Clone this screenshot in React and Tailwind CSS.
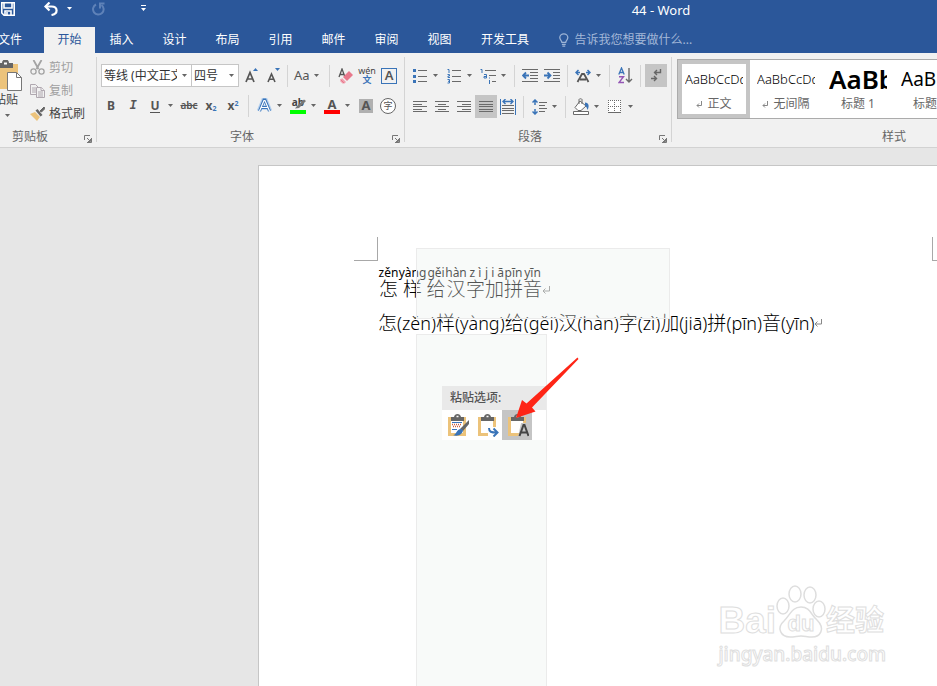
import React from "react";

const G = "#6a6a6a";
const B = "#3a74b8";

function Caret({ className = "text-[#666]" }) {
  return (
    <svg width="5" height="3" viewBox="0 0 5 3" className={className} aria-hidden="true">
      <path d="M0 0h5L2.5 3z" fill="currentColor" />
    </svg>
  );
}

function Tool({ label, active, children }) {
  return (
    <button
      type="button"
      aria-label={label}
      className={`flex h-[23px] w-[22px] shrink-0 items-center justify-center ${active ? "bg-[#c5c5c5]" : ""}`}
    >
      {children}
    </button>
  );
}

function Drop({ label }) {
  return (
    <button type="button" aria-label={label} className="flex h-[23px] w-3 shrink-0 items-center pl-[2px]">
      <Caret />
    </button>
  );
}

function Sep({ className = "mx-1" }) {
  return <span className={`h-[22px] w-px shrink-0 bg-[#d4d4d4] ${className}`} />;
}

function Combo({ label, value, className }) {
  return (
    <label className={`relative flex h-[23px] shrink-0 border border-[#c6c6c6] bg-white ${className}`}>
      <span className="sr-only">{label}</span>
      <select
        defaultValue={value}
        className="h-full w-full appearance-none overflow-hidden bg-transparent pr-[14px] pl-[2px] text-xs text-[#333] outline-none"
      >
        <option>{value}</option>
      </select>
      <span className="pointer-events-none absolute top-[9px] right-1 flex">
        <Caret />
      </span>
    </label>
  );
}

function Launcher({ label }) {
  return (
    <button type="button" aria-label={label} className="mr-1 mt-1 flex h-2 w-2 shrink-0">
      <svg width="8" height="8" viewBox="0 0 8 8" fill="none" stroke="#777">
        <path d="M.5 5V.5H6" />
        <path d="M3 3l3 3" />
        <path d="M7.5 3v4.5H3M6.5 4v2.5H4" />
      </svg>
    </button>
  );
}

function GroupLabel({ children, launcher = true, className = "" }) {
  return (
    <div className="flex items-center">
      <div className={`flex-1 text-center text-xs leading-[18px] text-[#666] ${className}`}>{children}</div>
      {launcher && <Launcher label={`${children}设置`} />}
    </div>
  );
}

function Lines({ rows }) {
  return (
    <svg width="14" height="15" viewBox="0 0 14 15" stroke={G} aria-hidden="true">
      {rows.map(([a, b], i) => (
        <path key={i} d={`M${a} ${[2.5, 5.5, 7.5, 10.5, 12.5][i]}H${b}`} />
      ))}
    </svg>
  );
}

const tabs = ["插入", "设计", "布局", "引用", "邮件", "审阅", "视图"];

function Header() {
  return (
    <header className="bg-[#2b579a] text-white">
      <div className="flex h-[22px] items-center">
        <div className="flex w-[385px] shrink-0 items-center pb-[5px]">
          <button type="button" aria-label="保存" className="ml-px">
            <svg width="14" height="14" viewBox="0 0 14 14" fill="none" stroke="white" strokeWidth="1.6">
              <path d="M.8.8h12.4v12.4H3L.8 11z" />
              <path d="M3 1v5h8V1" />
              <path d="M4 13V9h6v4" />
              <path d="M6 10v3" />
            </svg>
          </button>
          <button type="button" aria-label="撤消" className="ml-7">
            <svg width="16" height="14" viewBox="0 0 16 14" fill="none" stroke="white" strokeWidth="2.2">
              <path d="M6.500 .5L2.500 4.500l4 4" />
              <path d="M2.500 4.500h6c6.500 0 7 7.500 0 8.500" />
            </svg>
          </button>
          <button type="button" aria-label="撤消列表" className="ml-2 flex h-4 items-center">
            <Caret className="text-white" />
          </button>
          <button type="button" aria-label="重复" className="ml-5">
            <svg width="13" height="14" viewBox="0 0 13 14" fill="none" stroke="#5f82b8" strokeWidth="2">
              <path d="M4 2.500a5.300 5.300 0 1 0 5.500 .5" />
              <path d="M8 6.500V1.500H12.500" />
            </svg>
          </button>
          <button type="button" aria-label="自定义快速访问工具栏" className="ml-9">
            <svg width="6" height="7" viewBox="0 0 6 7" fill="white">
              <path d="M0 0h5v1H0zM0 3h5L2.500 6z" />
            </svg>
          </button>
        </div>
        <h1 className="flex-1 pb-[2px] text-center text-[13px] leading-[18px]">44 - Word</h1>
      </div>
      <nav className="flex pt-[5px] text-xs">
        <button type="button" className="-ml-4 h-[26px] w-[60px] shrink-0 pr-2 pb-px">
          文件
        </button>
        <button type="button" className="h-[26px] w-[51px] shrink-0 bg-[#f1f1f1] pb-px text-[#2b579a]">
          开始
        </button>
        {tabs.map((t) => (
          <button type="button" key={t} className="h-[26px] w-[53px] shrink-0 pb-px">
            {t}
          </button>
        ))}
        <button type="button" className="h-[26px] w-[78px] shrink-0 pb-px">
          开发工具
        </button>
        <label className="ml-[15px] flex min-w-0 flex-1 items-center gap-[6px]">
          <svg width="10" height="14" viewBox="0 0 10 14" fill="none" stroke="#9db4d6" strokeWidth="1.300">
            <path d="M3 9.500C3 7.500.8 7 .8 4.500a4.200 4 0 0 1 8.400 0C9.200 7 7 7.500 7 9.500z" />
            <path d="M3 11.500h4M3.500 13.300h3" />
          </svg>
          <input
            aria-label="告诉我您想要做什么"
            placeholder="告诉我您想要做什么..."
            className="w-full bg-transparent text-xs outline-none placeholder:text-[#a3b8d8]"
          />
        </label>
      </nav>
    </header>
  );
}

function Clipboard() {
  return (
    <section className="flex w-[96px] shrink-0 flex-col">
      <div className="flex h-[75px]">
        <button type="button" className="flex w-[30px] shrink-0 flex-col items-start pt-[7px] text-xs text-[#444]">
          <svg width="22" height="32" viewBox="0 0 22 32" aria-hidden="true">
            <path d="M0 4h18v25H0z" fill="#ecc37b" />
            <path d="M0 3h2a3.500 3.500 0 0 1 7 0h4v5H0z" fill="#666" />
            <path d="M4 3.500h3" stroke="white" strokeWidth="2" />
            <path d="M7.500 12.500h9l5 5v13h-14z" fill="white" stroke="#777" />
            <path d="M16.500 12.500v5h5" fill="none" stroke="#777" />
          </svg>
          <span className="-ml-[6px] leading-4">粘贴</span>
          <span className="flex pt-[6px] pl-[5px]">
            <Caret />
          </span>
        </button>
        <div className="flex flex-col pt-[3px] text-xs text-[#a0a0a0]">
          <button type="button" className="flex h-[23px] items-center gap-1">
            <svg width="15" height="15" viewBox="0 0 15 15" fill="none" stroke="#a3a3a3">
              <path d="M3.500 0l5 9M11.500 0l-5 9" strokeWidth="1.800" />
              <circle cx="3.500" cy="11.500" r="2.600" strokeWidth="1.300" />
              <circle cx="11.500" cy="11.500" r="2.600" strokeWidth="1.300" />
            </svg>
            剪切
          </button>
          <button type="button" className="flex h-[23px] items-center gap-1">
            <svg width="15" height="14" viewBox="0 0 15 14" fill="#f1f1f1" stroke="#b0a8b0">
              <path d="M.5.5h5l3 3v7h-8z" />
              <path d="M2 4h4M2 6h4M2 8h4" />
              <path d="M6.500 3.500h5l3 3v7h-8z" />
              <path d="M11 3.500v3h3.500M8 8h5M8 10h5M8 12h5" />
            </svg>
            复制
          </button>
          <button type="button" className="flex h-[23px] items-center gap-1 text-[#444]">
            <svg width="15" height="14" viewBox="0 0 15 14" aria-hidden="true">
              <path d="M0 7l5-2 5 5-3 4z" fill="#ecc37b" />
              <path d="M5.500 3.500L7.500 2l5 6-2 1.500z" fill="#666" />
              <path d="M10 4l4-4 1 1.500L11.500 5z" fill="#666" stroke="#666" />
            </svg>
            格式刷
          </button>
        </div>
      </div>
      <GroupLabel className="pr-6">剪贴板</GroupLabel>
    </section>
  );
}

function FontGroup() {
  return (
    <section className="flex w-[307px] shrink-0 flex-col pt-[11px] pl-[3px]">
      <div className="flex h-[23px] items-center">
        <Combo label="字体" value="等线 (中文正文)" className="ml-px w-[91px]" />
        <Combo label="字号" value="四号" className="-ml-px w-[48px]" />
        <span className="w-[2px]" />
        <Tool label="增大字号">
          <svg width="14" height="16" viewBox="0 0 14 16" fill="none" stroke="#555" strokeWidth="1.700">
            <path d="M1 14L5 4.500 9 14M2.500 11h5" />
            <path d="M8 3h5L10.500 0z" fill={B} stroke="none" />
          </svg>
        </Tool>
        <Tool label="减小字号">
          <svg width="14" height="16" viewBox="0 0 14 16" fill="none" stroke="#555" strokeWidth="1.600">
            <path d="M1 14l3.500-8L8 14M2.300 11.300h4.400" />
            <path d="M8 0h5l-2.500 3z" fill={B} stroke="none" />
          </svg>
        </Tool>
        <Sep className="mx-[2px]" />
        <button type="button" className="flex h-[23px] w-9 items-center gap-1 pl-1 text-[13px] text-[#555]">
          Aa <Caret />
        </button>
        <Sep className="mr-1 ml-[3px]" />
        <Tool label="清除格式">
          <svg width="15" height="16" viewBox="0 0 15 16" aria-hidden="true">
            <path d="M1 9l3-8 3 8M2 6.500h4" fill="none" stroke="#555" strokeWidth="1.300" />
            <path d="M5 9l6-6 4 4-6 6z" fill="#e8788c" />
            <path d="M4 10l4 4-1.500 1.500h-2L2 13z" fill="#f0a0ae" />
            <path d="M2.500 11.500L6 15" stroke="#e8788c" />
          </svg>
        </Tool>
        <button type="button" aria-label="拼音指南" className="flex w-[22px] flex-col items-center">
          <span className="text-[9px] leading-[9px] text-[#444]">wén</span>
          <span className="text-[9px] leading-[10px] font-bold text-[#3a74b8]">文</span>
        </button>
        <Tool label="字符边框">
          <span className="flex h-4 w-4 items-center justify-center border border-[#3a74b8] text-[13px] font-semibold text-[#555]">
            A
          </span>
        </Tool>
      </div>
      <div className="mt-[7px] flex h-[23px] items-center text-xs font-bold text-[#555]">
        <Tool label="加粗">B</Tool>
        <Tool label="倾斜">
          <span className="font-['Liberation_Mono',monospace] italic">I</span>
        </Tool>
        <Tool label="下划线">
          <span className="border-b border-[#555] leading-[13px]">U</span>
        </Tool>
        <Drop label="下划线样式" />
        <Tool label="删除线">
          <span className="text-[10px] font-semibold line-through">abc</span>
        </Tool>
        <Tool label="下标">
          <span>
            x<sub className="text-[7px] text-[#3a74b8]">2</sub>
          </span>
        </Tool>
        <Tool label="上标">
          <span>
            x<sup className="text-[7px] text-[#3a74b8]">2</sup>
          </span>
        </Tool>
        <Sep />
        <Tool label="文本效果">
          <svg width="15" height="15" viewBox="0 0 15 15" fill="none">
            <path d="M2 13L6.500 2h2L13 13M4 9.500h7" stroke="#b5d0ee" strokeWidth="4.500" />
            <path d="M2.500 13L7 2h1l4.500 11M4.500 9.500h6" stroke="#3a74b8" strokeWidth="3" />
            <path d="M2.500 13L7 2.500h1L12.500 13M4.500 9.500h6" stroke="white" strokeWidth="1.200" />
          </svg>
        </Tool>
        <Drop label="文本效果列表" />
        <Tool label="突出显示">
          <span className="relative flex h-4 w-4 flex-col justify-between">
            <span className="text-[10px] leading-[9px] text-[#444]">ab</span>
            <svg width="12" height="11" viewBox="0 0 12 11" className="absolute top-[1px] left-1" aria-hidden="true">
              <path d="M1 9.500L3 7l7-6.500L12 2 5 9z" fill="#777" />
            </svg>
            <span className="h-1 bg-[#00ff00]" />
          </span>
        </Tool>
        <Drop label="突出显示颜色" />
        <Tool label="字体颜色">
          <span className="flex h-4 w-4 flex-col items-center justify-between text-[13px] leading-[12px]">
            A<span className="h-1 w-full shrink-0 bg-[#ff0000]" />
          </span>
        </Tool>
        <Drop label="字体颜色列表" />
        <Tool label="字符底纹">
          <span className="flex h-[14px] w-[14px] items-center justify-center bg-[#b0b0b0] text-[13px]">A</span>
        </Tool>
        <Tool label="带圈字符">
          <span className="flex h-4 w-4 shrink-0 items-center justify-center rounded-full border border-[#666] bg-white text-[9px] leading-none font-normal">
            字
          </span>
        </Tool>
      </div>
      <div className="mt-[11px]">
        <GroupLabel className="pr-2">字体</GroupLabel>
      </div>
    </section>
  );
}

function ParagraphGroup() {
  return (
    <section className="flex w-[266px] shrink-0 flex-col pt-[11px] pl-1">
      <div className="flex h-[23px] items-center">
        <Tool label="项目符号">
          <svg width="14" height="16" viewBox="0 0 14 16">
            <path d="M0 1h3v3H0zM0 7h3v3H0zM0 12h3v3H0z" fill={B} />
            <path d="M5 2.500h9M5 8.500h9M5 13.500h9" stroke={G} />
          </svg>
        </Tool>
        <Drop label="项目符号库" />
        <Tool label="编号">
          <svg width="14" height="16" viewBox="0 0 14 16" fill="none" stroke={B}>
            <path d="M.5 1.500H2V5M.5 6.500H2.500V8H1V9.500H3M.5 11.500H2.500V15H.5M1 13.300h1.500" />
            <path d="M5 2.500h9M5 8.500h9M5 13.500h9" stroke={G} />
          </svg>
        </Tool>
        <Drop label="编号库" />
        <Tool label="多级列表">
          <svg width="16" height="16" viewBox="0 0 16 16" fill="none" stroke={B}>
            <path d="M.5 1.500H2V5M4 6.500h2.500V10H4V8.500h2.500M9.500 12v4M9.500 9.500v1" />
            <path d="M5 2.500h11M9 7.500h7M12 13.500h4" stroke={G} />
          </svg>
        </Tool>
        <Drop label="多级列表库" />
        <Sep className="mr-1 ml-[3px]" />
        <Tool label="减少缩进量">
          <svg width="16" height="13" viewBox="0 0 16 13" fill="none" stroke={G}>
            <path d="M0 .5h16M8 3.500h8M8 6.500h8M8 9.500h8M0 12.500h16" />
            <path d="M7 6.500H1M4 3.500l-3 3 3 3" stroke={B} strokeWidth="1.800" />
          </svg>
        </Tool>
        <Tool label="增加缩进量">
          <svg width="16" height="13" viewBox="0 0 16 13" fill="none" stroke={G}>
            <path d="M0 .5h16M9 3.500h7M9 6.500h7M9 9.500h7M0 12.500h16" />
            <path d="M0 6.500h6.500M3.500 3.500l3 3-3 3" stroke={B} strokeWidth="1.800" />
          </svg>
        </Tool>
        <Sep />
        <Tool label="中文版式">
          <svg width="16" height="14" viewBox="0 0 16 14" fill="none" stroke={B} strokeWidth="1.500">
            <path d="M3.500 1L1 3.500 3.500 6M1 3.500h4M12.500 1L15 3.500 12.500 6M15 3.500h-4" />
            <path d="M2.500 13L7 5h2l4.500 8M5 10.500h6" stroke="#555" strokeWidth="1.800" />
          </svg>
        </Tool>
        <Drop label="中文版式列表" />
        <Sep className="mr-1 ml-[3px]" />
        <Tool label="排序">
          <svg width="15" height="17" viewBox="0 0 15 17" fill="none">
            <path d="M.8 7.500L3.500 1l2.700 6.500M1.800 5.500h3.400" stroke={B} strokeWidth="1.300" />
            <path d="M1 9.700h4.500L1 15.500h5" stroke="#9457b5" strokeWidth="1.400" />
            <path d="M11 1v14M8 12l3 3 3-3" stroke={G} strokeWidth="1.400" />
          </svg>
        </Tool>
        <Sep />
        <Tool label="显示编辑标记" active>
          <svg width="12" height="13" viewBox="0 0 12 13" fill="none" stroke="#666" strokeWidth="1.400">
            <path d="M10.500 0v3.500H4.500M7 1L4.500 3.500 7 6" />
            <path d="M1 9.500h5M4 7l2.500 2.500L4 12" />
          </svg>
        </Tool>
      </div>
      <div className="mt-2 flex h-[23px] items-center">
        <Tool label="左对齐">
          <Lines rows={[[0, 14], [0, 9], [0, 14], [0, 9], [0, 14]]} />
        </Tool>
        <Tool label="居中">
          <Lines rows={[[0, 14], [3, 11], [0, 14], [3, 11], [0, 14]]} />
        </Tool>
        <Tool label="右对齐">
          <Lines rows={[[0, 14], [5, 14], [0, 14], [5, 14], [0, 14]]} />
        </Tool>
        <Tool label="两端对齐" active>
          <Lines rows={[[0, 14], [0, 14], [0, 14], [0, 14], [0, 14]]} />
        </Tool>
        <Tool label="分散对齐">
          <svg width="16" height="16" viewBox="0 0 16 16" fill="none" stroke={G}>
            <path d="M2 6.500h12M2 9.500h12M2 11.500h12M2 14.500h12" />
            <path d="M.5 0v16M15.500 0v16" stroke={B} />
            <path d="M3 2.500h10M5.500 0L3 2.500 5.500 5M10.500 0L13 2.500 10.500 5" stroke={B} strokeWidth="1.400" />
          </svg>
        </Tool>
        <Sep />
        <Tool label="行距">
          <svg width="15" height="16" viewBox="0 0 15 16" fill="none" stroke={G}>
            <path d="M7 3.500h8M7 6.500h6M7 9.500h8M7 12.500h6" />
            <path d="M3 1v5M.5 3.500L3 1l2.500 2.500M3 10v5M.5 12.500L3 15l2.500-2.500" stroke={B} strokeWidth="1.500" />
          </svg>
        </Tool>
        <Drop label="行距列表" />
        <Sep className="mr-1 ml-[3px]" />
        <Tool label="底纹">
          <svg width="17" height="17" viewBox="0 0 17 17" fill="none" stroke={G}>
            <path d="M7 3l6 5-5 4.500H5L2 9.500z" fill="white" />
            <path d="M6 6V1.500C6 .5 9 .5 9 1.500V6" />
            <path d="M12 4.500c4 0 4.500 4 2.500 7.500-.5-2-1-3-2.500-4.500z" fill={B} stroke="none" />
            <path d="M.5 13.500h15v3H.5z" fill="white" />
          </svg>
        </Tool>
        <Drop label="底纹颜色" />
        <Tool label="边框">
          <svg width="14" height="13" viewBox="0 0 14 13" shapeRendering="crispEdges" stroke={G}>
            <path d="M0 0h13v12H0z" fill="white" stroke="none" />
            <path d="M0 .5h13M0 6.500h13M.5 0v12M6.500 0v12M12.500 0v12" strokeDasharray="1 1" />
            <path d="M0 12.500h13" />
          </svg>
        </Tool>
        <Drop label="边框列表" />
      </div>
      <div className="mt-[10px]">
        <GroupLabel className="pr-2">段落</GroupLabel>
      </div>
    </section>
  );
}

const styles = [
  { name: "正文", mark: true, sample: "AaBbCcDd", cls: "text-[13px] font-light", active: true },
  { name: "无间隔", mark: true, sample: "AaBbCcDd", cls: "text-[13px] font-light" },
  { name: "标题 1", sample: "AaBbC", cls: "text-[26px] font-semibold" },
  { name: "标题 2", sample: "AaBbC", cls: "text-[19px]" },
];

function StylesGroup() {
  return (
    <section className="flex min-w-0 flex-1 flex-col pt-[6px] pl-[5px]">
      <div className="flex h-[60px] overflow-hidden border-y border-l border-[#ababab] bg-white">
        {styles.map((s) => (
          <button
            type="button"
            key={s.name}
            className={`flex w-[72px] shrink-0 flex-col items-stretch border-4 px-[3px] ${
              s.active ? "border-[#c5c5c5]" : "border-transparent"
            }`}
          >
            <span
              className={`flex h-[31px] shrink-0 items-center overflow-hidden whitespace-nowrap text-black ${s.cls}`}
            >
              {s.sample}
            </span>
            <span className="flex items-center justify-center gap-1 text-xs leading-[18px] whitespace-nowrap text-[#666]">
              {s.mark && <PilcrowMark />}
              {s.name}
            </span>
          </button>
        ))}
      </div>
      <div className="mt-[9px] w-[434px]">
        <GroupLabel launcher={false}>样式</GroupLabel>
      </div>
    </section>
  );
}

function PilcrowMark() {
  return (
    <svg width="7" height="7" viewBox="0 0 7 7" fill="none" stroke="#888" aria-hidden="true">
      <path d="M5.500 0v4.500H1M3 2.500l-2 2 2 2" />
    </svg>
  );
}

function Divider() {
  return <span className="mt-1 mb-[5px] w-px shrink-0 bg-[#d4d4d4]" />;
}

function ClipIcon({ children }) {
  return (
    <svg width="24" height="24" viewBox="0 0 24 24" fill="none" aria-hidden="true">
      <path d="M4.500 5.500h15v16h-15z" fill="white" stroke="#ecc37b" strokeWidth="3" />
      <path d="M6 4h3c.5-4 6.500-4 7 0h3v4H6z" fill="#666" />
      <path d="M11.500 3.500h2" stroke="white" strokeWidth="1.500" />
      {children}
    </svg>
  );
}

function PasteOptions() {
  return (
    <div className="absolute top-[220px] left-[183px] w-[104px] bg-white">
      <div className="h-6 bg-[#e9e9e9] pl-2 text-xs leading-[23px] font-medium text-[#555]">粘贴选项:</div>
      <div className="flex">
        <button type="button" aria-label="保留源格式" className="flex h-[30px] w-[30px] items-center justify-center">
          <ClipIcon>
            <path d="M7 9.500h10M7 16.500h5" stroke={B} />
            <path d="M7 11.500h10M8 13.500h8" stroke="#d0603c" strokeWidth="1.500" strokeDasharray="1 1" />
            <path d="M24 7v4l-6 7-3-2z" fill="#666" />
            <path d="M16 16c3 1 2 3 0 5s-6 2-8 1c4 0 3-6 8-6z" fill={B} />
          </ClipIcon>
        </button>
        <button type="button" aria-label="合并格式" className="flex h-[30px] w-[30px] items-center justify-center">
          <ClipIcon>
            <path d="M13 14h10v9H13z" fill="white" />
            <path d="M14 15c0 4 2 4.500 8 4.500M18.500 15.500l4 4-4 4" stroke={B} strokeWidth="2" />
          </ClipIcon>
        </button>
        <button
          type="button"
          aria-label="只保留文本"
          className="flex h-[30px] w-[30px] items-center justify-center bg-[#c5c5c5]"
        >
          <ClipIcon>
            <path d="M16 10h8v14H13z" fill="#c5c5c5" />
            <path d="M14.500 23l4-11h1l4 11M16 19.500h6" stroke="#444" strokeWidth="2" />
          </ClipIcon>
        </button>
      </div>
    </div>
  );
}

const ruby = [
  ["怎", "zěn", "w-[21px]"],
  ["样", "yàng", "w-[27px]"],
  ["给", "gěi", "w-[20px]"],
  ["汉", "hàn", "w-[20px]"],
  ["字", "z ì", "w-[19px]"],
  ["加", "j i ā", "w-[19px]"],
  ["拼", "pīn", "w-[19px]"],
  ["音", "yīn", "w-[19px]"],
];

const inline = [
  ["怎", "(zěn)"],
  ["样", "(yàng)"],
  ["给", "(gěi)"],
  ["汉", "(hàn)"],
  ["字", "(zì)"],
  ["加", "(jiā)"],
  ["拼", "(pīn)"],
  ["音", "(yīn)"],
];

function Return() {
  return (
    <svg width="8" height="8" viewBox="0 0 8 8" fill="none" stroke="#888" aria-hidden="true" className="shrink-0">
      <path d="M7.500 0v5H1M3.500 2.500L1 5l2.500 2.500" />
    </svg>
  );
}

function Watermark() {
  return (
    <div className="absolute right-[51px] bottom-[20px] flex flex-col items-end font-['Liberation_Sans','Noto_Sans_CJK_SC',sans-serif] font-bold text-white [-webkit-text-stroke:1px_#dedede]">
      <div className="flex items-end pr-[2px]">
        <span className="text-[37px] leading-[34px]">Bai</span>
        <span className="relative flex h-[54px] w-[50px] items-end justify-center">
          <svg width="50" height="54" viewBox="0 0 50 54" fill="white" stroke="#dedede" strokeWidth="1.500" className="absolute inset-0">
            <ellipse cx="7" cy="22" rx="6" ry="8" />
            <ellipse cx="19" cy="10" rx="6" ry="8" />
            <ellipse cx="34" cy="11" rx="6" ry="8" />
            <ellipse cx="43" cy="25" rx="6" ry="8" />
            <path d="M25 23c9 0 10 8 16 13 9 9 3 17-5 17-5 0-7-1-11-1s-6 1-11 1c-9 0-14-9-6-16 6-6 8-14 17-14z" />
          </svg>
          <span className="relative text-[22px] leading-[28px]">du</span>
        </span>
        <span className="text-[29px] leading-[34px]">经验</span>
      </div>
      <div className="pt-1 font-['Noto_Sans',sans-serif] text-[19px] leading-[24px] font-medium">jingyan.baidu.com</div>
    </div>
  );
}

function Document() {
  return (
    <main className="flex flex-1 bg-[#e6e6e6] pt-[17px] pl-[258px]">
      <article className="relative min-h-[520px] flex-1 overflow-hidden border-t border-l border-[#c6c6c6] bg-white text-black">
        <div className="flex justify-between pt-[71px] pl-[95px]">
          <span className="h-6 w-6 border-r border-b border-[#a8a8a8]" />
          <span className="h-6 w-[5px] border-b border-l border-[#a8a8a8]" />
        </div>
        <div className="pl-[119px]">
          <p className="flex items-end pt-[5px]">
            {ruby.map(([char, pinyin, width]) => (
              <span key={char} className={`flex shrink-0 flex-col items-center ${width}`}>
                <span className="text-xs leading-[14px] whitespace-nowrap">{pinyin}</span>
                <span className="text-[19px] leading-[18px] font-light">{char}</span>
              </span>
            ))}
            <span className="flex pb-1">
              <Return />
            </span>
          </p>
          <p className="flex items-center pt-[13px] text-[18px] leading-[24px] font-light whitespace-nowrap">
            <span>
              {inline.map(([char, pinyin]) => (
                <React.Fragment key={char}>
                  <span className="text-[19px]">{char}</span>
                  {pinyin}
                </React.Fragment>
              ))}
            </span>
            <Return />
          </p>
        </div>
        <div className="absolute top-[82px] left-[157px] h-[71px] w-[254px] border border-[#ebebeb] bg-[#ebf1ee]/35" />
        <div className="absolute top-[168px] bottom-0 left-[157px] w-[131px] border border-b-0 border-[#ebebeb] bg-[#ebf1ee]/35" />
        <PasteOptions />
        <svg width="64" height="62" viewBox="0 0 64 62" className="absolute top-[191px] left-[256px]" aria-hidden="true">
          <path d="M62.500 .5L63.500 2 17 50.500 20.500 54.500 1 61 7 43 11.500 46.500z" fill="#fe2516" />
        </svg>
        <Watermark />
      </article>
    </main>
  );
}

export default function App() {
  return (
    <div className="flex min-h-screen flex-col overflow-hidden font-['Noto_Sans','Noto_Sans_CJK_SC',sans-serif]">
      <Header />
      <div className="flex h-[95px] border-b border-[#d2d2d2] bg-[#f1f1f1]">
        <Clipboard />
        <Divider />
        <FontGroup />
        <Divider />
        <ParagraphGroup />
        <Divider />
        <StylesGroup />
      </div>
      <Document />
    </div>
  );
}
